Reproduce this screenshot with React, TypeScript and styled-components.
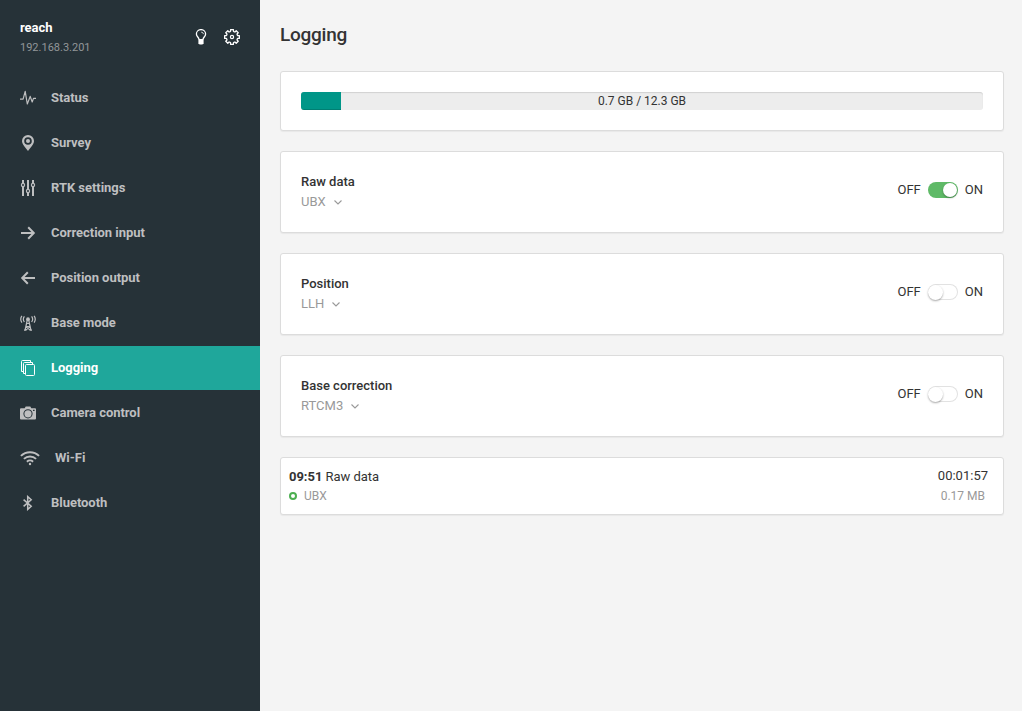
import React from 'react';
import styled, { createGlobalStyle } from 'styled-components';

const GlobalStyle = createGlobalStyle`
  * { box-sizing: border-box; }
  body {
    margin: 0;
    background: #f4f4f4;
    color: #333;
    font-family: Roboto, "Liberation Sans", sans-serif;
    font-size: 13px;
    line-height: 20px;
  }
`;

const Layout = styled.div`
  display: flex;
  min-height: 100vh;
`;

const Sidebar = styled.aside`
  flex: 0 0 260px;
  background: #263238;
`;

const DeviceHeader = styled.header`
  display: flex;
  justify-content: space-between;
  height: 76px;
  padding: 18px 20px 0;
`;

const DeviceName = styled.div`
  color: #fff;
  font-weight: 700;
  letter-spacing: -0.05px;
`;

const DeviceAddress = styled.div`
  color: #929699;
  font-size: 11px;
`;

const HeaderActions = styled.div`
  display: flex;
  gap: 17px;
  padding-top: 11px;
  color: #fff;
`;

const Icon = styled.svg<{ $w?: number }>`
  display: block;
  flex: none;
  width: ${(p) => p.$w ?? 16}px;
  height: 16px;
  fill: currentColor;
`;

const Menu = styled.nav`
  display: flex;
  flex-direction: column;
  gap: 1px;
`;

const MenuItem = styled.a<{ $active?: boolean }>`
  display: flex;
  align-items: center;
  gap: 15px;
  height: 44px;
  padding: 0 20px;
  font-weight: 700;
  letter-spacing: -0.04px;
  color: ${(p) => (p.$active ? '#fff' : '#bebfc0')};
  background: ${(p) => (p.$active ? '#1fa79b' : 'transparent')};

  span { margin-top: -1px; }
`;

const Main = styled.main`
  flex: 1;
  padding: 22px 18px 0 20px;
`;

const Title = styled.h1`
  margin: 0 0 24px;
  font-size: 19px;
  font-weight: 500;
  line-height: 25px;
  letter-spacing: -0.25px;
`;

const Card = styled.section`
  margin-bottom: 20px;
  padding: 20px;
  background: #fff;
  border: 1px solid #dcdcdc;
  border-radius: 3px;
  box-shadow: 0 1px 1px rgba(0, 0, 0, 0.05);
`;

const StorageCard = styled(Card)`
  height: 60px;
`;

const Progress = styled.div`
  display: grid;
  height: 18px;
  overflow: hidden;
  background: #ededed;
  border-radius: 3px;
  box-shadow: inset 0 1px 1px rgba(0, 0, 0, 0.12);
`;

const ProgressFill = styled.div`
  grid-area: 1 / 1;
  background: #009688;
  box-shadow: inset 0 -1px 0 rgba(0, 0, 0, 0.15);
`;

const ProgressLabel = styled.div`
  grid-area: 1 / 1;
  text-align: center;
  font-size: 12px;
  line-height: 18px;
`;

const LogCard = styled(Card)`
  display: flex;
  justify-content: space-between;
  height: 82px;
`;

const LogName = styled.div`
  font-weight: 500;
`;

const FormatSelect = styled.div`
  display: flex;
  align-items: center;
  gap: 8px;
  color: #999;
`;

const Chevron = styled.svg`
  width: 8px;
  height: 5px;
  margin-top: 1px;
  fill: none;
  stroke: currentColor;
  stroke-width: 1.1;
`;

const Switch = styled.div`
  display: flex;
  gap: 7px;
  height: 16px;
  margin-top: 10px;
  line-height: 16px;
`;

const Track = styled.div<{ $on?: boolean }>`
  display: flex;
  justify-content: ${(p) => (p.$on ? 'flex-end' : 'flex-start')};
  width: 30px;
  height: 16px;
  padding: ${(p) => (p.$on ? '1px 0.5px' : '0.5px')};
  border-radius: 8px;
  background: ${(p) => (p.$on ? '#5fba67' : '#fff')};
  box-shadow: ${(p) => (p.$on ? 'none' : 'inset 0 0 0 1px #e2e2e2')};
`;

const Knob = styled.div<{ $on?: boolean }>`
  width: ${(p) => (p.$on ? 14 : 15)}px;
  height: ${(p) => (p.$on ? 14 : 15)}px;
  border-radius: 50%;
  background: #fff;
  box-shadow: 0 1px 2px rgba(0, 0, 0, 0.35);
`;

const RecordCard = styled(Card)`
  display: flex;
  justify-content: space-between;
  height: 58px;
  padding: 9px 15px 0 8px;
`;

const RecordTitle = styled.div`
  letter-spacing: -0.03px;

  b { font-weight: 700; }
`;

const RecordMeta = styled.div`
  display: flex;
  align-items: center;
  gap: 7px;
  height: 18px;
  color: #999;
  font-size: 12px;
`;

const RecordStats = styled.div`
  text-align: right;
  margin-top: -1px;
`;

const RecordSize = styled.div`
  padding-right: 3px;
  color: #999;
  font-size: 12px;
  line-height: 21px;
`;

const StatusRing = styled.i`
  width: 8px;
  height: 8px;
  border: 2px solid #4caf50;
  border-radius: 50%;
`;

const line = { fill: 'none', stroke: 'currentColor' } as const;

const BulbIcon = () => (
  <Icon $w={12} viewBox="0 0 12 16">
    <path {...line} strokeWidth="1.3" d="M4 10.5C4 8.3 1.4 7.6 1.4 5a4.6 4.4 0 0 1 9.2 0c0 2.6-2.6 3.3-2.6 5.5" />
    <path d="M3.400 10h5.200v4.200L7.400 15.600H4.600L3.400 14.200z" />
    <path {...line} strokeWidth=".9" d="M6.300 3.200c1.200 0 2 .8 2 1.900" />
  </Icon>
);

const teeth = Array.from({ length: 8 }, (_, i) => {
  const at = (deg: number, r: number) => {
    const a = ((i * 45 + deg) * Math.PI) / 180;
    return `${(8 + r * Math.sin(a)).toFixed(2)} ${(8 - r * Math.cos(a)).toFixed(2)}`;
  };
  return `${i ? 'L' : 'M'}${at(-14, 5.9)}L${at(-11, 7.5)}L${at(11, 7.5)}L${at(14, 5.9)}L${at(22.5, 5.6)}`;
}).join('');

const GearIcon = () => (
  <Icon viewBox="0 0 16 16">
    <path {...line} strokeWidth="1.3" strokeLinejoin="round" d={`${teeth}Z`} />
    <circle {...line} strokeWidth="1.2" cx="8" cy="8" r="1.6" />
  </Icon>
);

const items: { label: string; active?: boolean; icon: React.ReactNode }[] = [
  {
    label: 'Status',
    icon: (
      <Icon viewBox="0 0 16 16">
        <path {...line} strokeWidth="1.2" strokeLinejoin="round" d="M0 9.200h3.100L5.200 1.400 7.300 14l2.900-7.600 2 5.600 1.300-3.600H16" />
      </Icon>
    ),
  },
  {
    label: 'Survey',
    icon: (
      <Icon viewBox="0 0 16 16">
        <path fillRule="evenodd" d="M8 0a6 6 0 0 1 6 6c0 3.600-3.600 6.400-6 10C5.600 12.400 2 9.600 2 6a6 6 0 0 1 6-6zm0 2.200a3.800 3.800 0 1 0 0 7.600 3.800 3.800 0 0 0 0-7.600z" />
        <circle cx="8" cy="6" r="2" />
      </Icon>
    ),
  },
  {
    label: 'RTK settings',
    icon: (
      <Icon viewBox="0 0 16 16">
        <path {...line} strokeWidth="2" d="M3 0v3M3 7v9M8 0v9M8 13v3M13 0v3M13 7v9" />
        <g {...line} strokeWidth="1.200">
          <circle cx="3" cy="5" r="1.600" />
          <circle cx="8" cy="11" r="1.600" />
          <circle cx="13" cy="5" r="1.600" />
        </g>
      </Icon>
    ),
  },
  {
    label: 'Correction input',
    icon: (
      <Icon viewBox="0 0 16 16">
        <path {...line} strokeWidth="2" d="M1 8h13M8.200 2.200 13.800 8l-5.600 5.800" />
      </Icon>
    ),
  },
  {
    label: 'Position output',
    icon: (
      <Icon viewBox="0 0 16 16">
        <path {...line} strokeWidth="2" d="M15 8H2M7.800 2.200 2.200 8l5.600 5.800" />
      </Icon>
    ),
  },
  {
    label: 'Base mode',
    icon: (
      <Icon viewBox="0 0 16 16">
        <g {...line} strokeWidth="1.200">
          <path d="M1.900 .8a6 6 0 0 0 0 6.800M4.400 1.400a4.600 4.600 0 0 0 0 5.600M14.100 .8a6 6 0 0 1 0 6.800M11.600 1.400a4.600 4.600 0 0 1 0 5.600" />
          <path d="M7.300 5 5 15.500M8.700 5 11 15.500M6.400 8.500h3.200M5.800 11.500h4.400M4 15.200h2.500M9.500 15.200H12M6 12l4 2.800M10 12l-4 2.800" />
        </g>
        <circle cx="8" cy="4.200" r="1.900" />
      </Icon>
    ),
  },
  {
    label: 'Logging',
    active: true,
    icon: (
      <Icon viewBox="0 0 16 16">
        <g {...line}>
          <rect x="5.500" y="4.500" width="9" height="11" rx="1" />
          <path d="M3.500 13.500V3.500a1 1 0 0 1 1-1H12.500M1.500 11.500V1.500a1 1 0 0 1 1-1H10.500" />
          <path d="M5 13.500H3.500M3 11.500H1.500M12.500 4.500v-2M10.500 2V.5" />
        </g>
      </Icon>
    ),
  },
  {
    label: 'Camera control',
    icon: (
      <Icon viewBox="0 0 16 16">
        <path fillRule="evenodd" d="M1 3.300h3.700L5.700 1.500h4.600l1 1.800H15a1 1 0 0 1 1 1V13.500a1 1 0 0 1-1 1H1a1 1 0 0 1-1-1V4.300a1 1 0 0 1 1-1zM8 4.200a4.600 4.600 0 1 0 0 9.200 4.600 4.600 0 0 0 0-9.200zM13 4.800v1.200h1.600V4.800z" />
        <circle cx="8" cy="8.800" r="3.600" />
      </Icon>
    ),
  },
  {
    label: 'Wi-Fi',
    icon: (
      <Icon $w={20} viewBox="0 0 20 16">
        <g {...line} strokeWidth="1.900">
          <path d="M.9 5.900a13 13 0 0 1 18.200 0M3.900 8.900a8.800 8.800 0 0 1 12.200 0M6.900 11.700a4.600 4.600 0 0 1 6.200 0" />
        </g>
        <circle cx="10" cy="14" r="1.200" />
      </Icon>
    ),
  },
  {
    label: 'Bluetooth',
    icon: (
      <Icon viewBox="0 0 16 16">
        <path {...line} strokeWidth="1.500" d="M3.600 4.600 11.200 11.300 7.700 14.400V1.600L11.200 4.700 3.600 11.400" />
      </Icon>
    ),
  },
];

const logs = [
  { name: 'Raw data', format: 'UBX', on: true },
  { name: 'Position', format: 'LLH', on: false },
  { name: 'Base correction', format: 'RTCM3', on: false },
];

export default function App() {
  return (
    <Layout>
      <GlobalStyle />
      <Sidebar>
        <DeviceHeader>
          <div>
            <DeviceName>reach</DeviceName>
            <DeviceAddress>192.168.3.201</DeviceAddress>
          </div>
          <HeaderActions>
            <BulbIcon />
            <GearIcon />
          </HeaderActions>
        </DeviceHeader>
        <Menu>
          {items.map((item) => (
            <MenuItem key={item.label} $active={item.active}>
              {item.icon}
              <span>{item.label}</span>
            </MenuItem>
          ))}
        </Menu>
      </Sidebar>
      <Main>
        <Title>Logging</Title>
        <StorageCard>
          <Progress>
            <ProgressFill style={{ width: `${(0.72 / 12.3) * 100}%` }} />
            <ProgressLabel>0.7 GB / 12.3 GB</ProgressLabel>
          </Progress>
        </StorageCard>
        {logs.map((log) => (
          <LogCard key={log.name}>
            <div>
              <LogName>{log.name}</LogName>
              <FormatSelect>
                {log.format}
                <Chevron viewBox="0 0 8 5">
                  <path d="M.5 .5 4 4 7.500 .5" />
                </Chevron>
              </FormatSelect>
            </div>
            <Switch>
              <span>OFF</span>
              <Track $on={log.on}>
                <Knob $on={log.on} />
              </Track>
              <span>ON</span>
            </Switch>
          </LogCard>
        ))}
        <RecordCard>
          <div>
            <RecordTitle>
              <b>09:51</b> Raw data
            </RecordTitle>
            <RecordMeta>
              <StatusRing />
              UBX
            </RecordMeta>
          </div>
          <RecordStats>
            <div>00:01:57</div>
            <RecordSize>0.17 MB</RecordSize>
          </RecordStats>
        </RecordCard>
      </Main>
    </Layout>
  );
}
